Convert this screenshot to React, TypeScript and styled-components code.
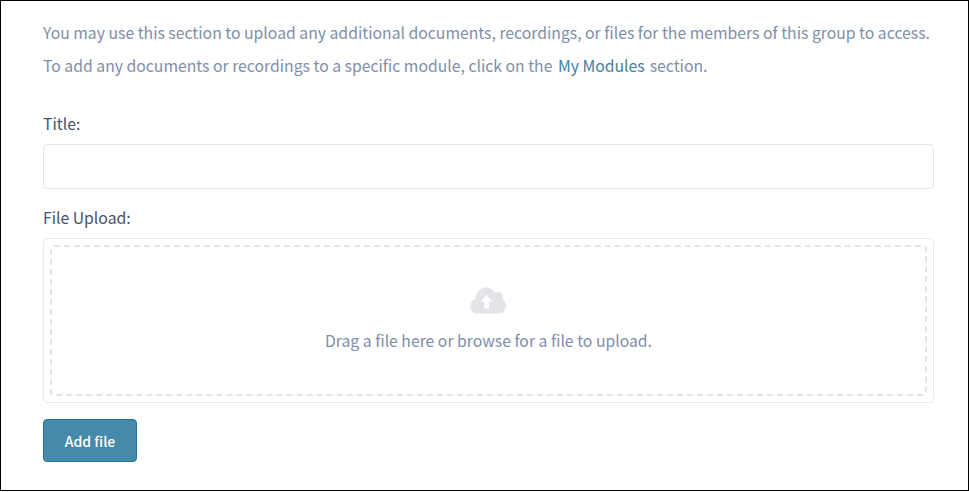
import React from "react";
import styled, { createGlobalStyle } from "styled-components";

const Global = createGlobalStyle`
  html, body { margin: 0; padding: 0; background: #fff; }
  * { box-sizing: border-box; }
`;

const Frame = styled.div`
  width: 969px;
  height: 491px;
  border: 1px solid #000;
  padding: 16px 34px 0 42px;
  font-family: "Noto Sans CJK SC", "Source Sans Pro", "Open Sans", sans-serif;
  font-size: 15.75px;
  color: #7f8ea8;
`;

const Intro = styled.p`
  margin: 0;
  line-height: 32.5px;
  white-space: nowrap;
`;

const IntroLink = styled.a`
  color: #41809f;
  margin: 0 5px 0 2px;
  text-decoration: none;
`;

const Field = styled.div`
  display: flex;
  flex-direction: column;
`;

const TitleField = styled(Field)`
  margin-top: 30px;
`;

const UploadField = styled(Field)`
  margin-top: 17px;
`;

const Label = styled.label`
  color: #46536a;
  line-height: 24px;
  height: 24px;
  margin-bottom: 8px;
`;

const TextInput = styled.input`
  display: block;
  width: 891px;
  height: 45px;
  border: 1px solid #e4e5ee;
  border-radius: 4px;
  background: #fff;
  outline: none;
`;

const DropZone = styled.div`
  width: 891px;
  height: 165px;
  padding: 6px;
  border: 1px solid #e9e9f0;
  border-radius: 4px;
`;

const DropInner = styled.div`
  height: 100%;
  border: 2px dashed #e4e4ec;
  border-radius: 4px;
  display: flex;
  flex-direction: column;
  align-items: center;
  padding-top: 40px;
`;

const CloudIcon = styled.svg`
  display: block;
  width: 36px;
  height: 27px;
  margin-right: 1px;
`;

const DropText = styled.div`
  margin-top: 15px;
  line-height: 24px;
`;

const AddButton = styled.button`
  display: block;
  margin-top: 16px;
  width: 94px;
  height: 43px;
  background: #468aab;
  border: 1px solid #20779c;
  border-radius: 4px;
  color: #fff;
  font-family: inherit;
  font-size: 14px;
  font-weight: 500;
  padding: 0;
`;

export default function App() {
  return (
    <>
      <Global />
      <Frame>
        <Intro>You may use this section to upload any additional documents, recordings, or files for the members of this group to access.</Intro>
        <Intro>
          To add any documents or recordings to a specific module, click on the <IntroLink href="#">My Modules</IntroLink>section.
        </Intro>
        <TitleField>
          <Label>Title:</Label>
          <TextInput type="text" />
        </TitleField>
        <UploadField>
          <Label>File Upload:</Label>
          <DropZone>
            <DropInner>
              <CloudIcon viewBox="0 0 36 27" aria-hidden="true">
                <path
                  fill="#e3e3ea"
                  fillRule="evenodd"
                  d="M8 26.5C3.6 26.5 0.3 23.4 0.3 19.2C0.3 15.8 2.4 13.2 5.3 12.2C5.5 6 10.2 0.6 16 0.6C20 0.6 23.3 2.8 25 6.2C25.9 5.4 27 5 28.2 5C30.9 5 32.9 7.1 32.9 9.8C32.9 10.6 32.7 11.4 32.4 12.1C34.5 13.2 35.9 15.6 35.9 18.8C35.9 23.1 32.5 26.5 28.2 26.5ZM14.2 21.5H19V14.7H22.6L16.6 8L10.6 14.7H14.2Z"
                />
              </CloudIcon>
              <DropText>Drag a file here or browse for a file to upload.</DropText>
            </DropInner>
          </DropZone>
        </UploadField>
        <AddButton>Add file</AddButton>
      </Frame>
    </>
  );
}
